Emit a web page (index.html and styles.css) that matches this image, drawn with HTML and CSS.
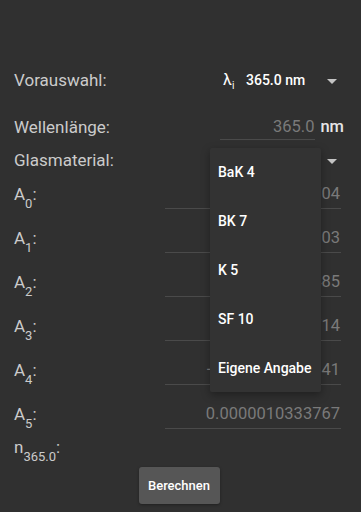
FILE: index.html
```html
<!DOCTYPE html>
<html lang="de">
<head>
<meta charset="utf-8">
<title>Brechzahl</title>
<link rel="stylesheet" href="styles.css">
</head>
<body>
<div class="page">
  <div class="row r-vor">
    <span class="label">Vorauswahl:</span>
    <div class="select">
      <span class="lam">λ<sub>i</sub></span>
      <span class="sel-text">365.0 nm</span>
      <span class="arrow"></span>
    </div>
  </div>
  <div class="row r-wl">
    <span class="label">Wellenlänge:</span>
    <div class="wl-group">
      <span class="wl-field">365.0</span>
      <span class="unit">nm</span>
    </div>
  </div>
  <div class="row r-glas">
    <span class="label">Glasmaterial:</span>
    <div class="select">
      <span class="sel-text">BaK 4</span>
      <span class="arrow"></span>
    </div>
  </div>
  <div class="coeffs">
    <div class="row"><span class="label">A<sub>0</sub>:</span><span class="field">2.3843704</span></div>
    <div class="row"><span class="label">A<sub>1</sub>:</span><span class="field">-0.0099145803</span></div>
    <div class="row"><span class="label">A<sub>2</sub>:</span><span class="field">0.013952485</span></div>
    <div class="row"><span class="label">A<sub>3</sub>:</span><span class="field">0.00021936714</span></div>
    <div class="row"><span class="label">A<sub>4</sub>:</span><span class="field">−0.000000195341</span></div>
    <div class="row"><span class="label">A<sub>5</sub>:</span><span class="field">0.0000010333767</span></div>
  </div>
  <div class="row r-n">
    <span class="label">n<sub>365.0</sub>:</span>
  </div>
  <div class="actions">
    <button class="btn" type="button">Berechnen</button>
  </div>
  <div class="menu">
    <div class="menu-item">BaK 4</div>
    <div class="menu-item">BK 7</div>
    <div class="menu-item">K 5</div>
    <div class="menu-item">SF 10</div>
    <div class="menu-item">Eigene Angabe</div>
  </div>
</div>
</body>
</html>
```
FILE: styles.css
```css
html, body {
  margin: 0;
  background: #303030;
}
body {
  font-family: Roboto, "Noto Sans", sans-serif;
}
.page {
  position: relative;
  height: 512px;
  box-sizing: border-box;
  padding: 68px 17px 0 14px;
}
.row {
  display: flex;
  justify-content: space-between;
  align-items: flex-start;
}
.label {
  font-size: 17px;
  line-height: 24px;
  color: #cbcbcb;
}
.label sub {
  font-size: 13px;
  line-height: 0;
  vertical-align: -8px;
}
.select {
  width: 120px;
  height: 24px;
  margin-right: 3px;
  padding-left: 2px;
  box-sizing: border-box;
  display: flex;
  align-items: center;
}
.lam {
  width: 23px;
  font-size: 16px;
  line-height: 24px;
  color: #fff;
}
.lam sub {
  font-size: 10px;
  line-height: 0;
  vertical-align: -4px;
}
.sel-text {
  font-size: 14px;
  font-weight: 500;
  color: #fff;
}
.arrow {
  margin-left: auto;
  margin-right: 4px;
  margin-top: 3px;
  width: 0;
  height: 0;
  border-left: 5px solid transparent;
  border-right: 5px solid transparent;
  border-top: 5px solid #c4c4c4;
}
.r-wl {
  margin-top: 23px;
}
.wl-group {
  display: flex;
  align-items: flex-start;
}
.wl-field {
  width: 95px;
  box-sizing: border-box;
  padding-right: 1px;
  border-bottom: 1px solid #4a4a4a;
  text-align: right;
  font-size: 16.5px;
  line-height: 24px;
  color: #7a7a7a;
}
.unit {
  margin-left: 5px;
  font-size: 16.5px;
  font-weight: 500;
  line-height: 24px;
  color: #e6e6e6;
}
.r-glas {
  margin-top: 8px;
}
.coeffs {
  margin-top: 10px;
  display: flex;
  flex-direction: column;
  gap: 17px;
}
.field {
  width: 176px;
  box-sizing: border-box;
  margin-right: 3px;
  padding: 0 1px 2px 0;
  border-bottom: 1px solid #4a4a4a;
  text-align: right;
  font-size: 16.5px;
  line-height: 24px;
  color: #7a7a7a;
  white-space: nowrap;
}
.r-n {
  margin-top: 6px;
}
.actions {
  display: flex;
  justify-content: center;
  margin-top: 8px;
}
.btn {
  width: 81px;
  height: 37px;
  padding: 0;
  background: #565656;
  border: none;
  border-radius: 3px;
  color: #fff;
  font-family: inherit;
  font-size: 13px;
  font-weight: 500;
  box-shadow: 0 1px 3px rgba(0, 0, 0, 0.35);
}
.menu {
  position: absolute;
  left: 210px;
  top: 148px;
  width: 111px;
  background: #333333;
  border-radius: 2px;
  box-shadow: 0 3px 8px rgba(0, 0, 0, 0.35);
}
.menu-item {
  height: 48.8px;
  display: flex;
  align-items: center;
  padding-left: 8px;
  font-size: 14px;
  font-weight: 500;
  color: #fff;
  white-space: nowrap;
}
```
